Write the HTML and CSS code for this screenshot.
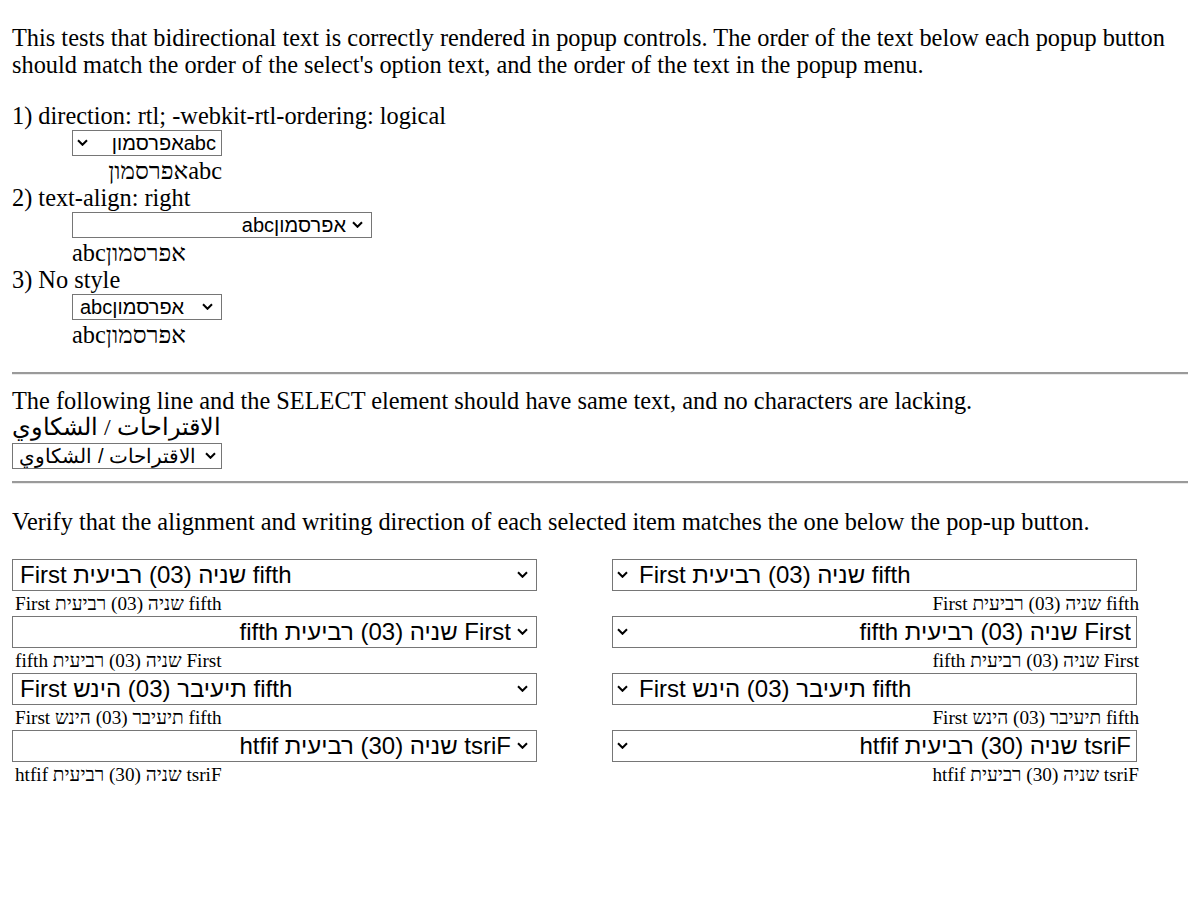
FILE: index.html
```html
<!DOCTYPE html>
<html>
<head>
<meta charset="utf-8">
<title>Bidi popup test</title>
<link rel="stylesheet" href="styles.css">
</head>
<body>
<p class="intro">This tests that bidirectional text is correctly rendered in popup controls. The order of the text below each popup button should match the order of the select's option text, and the order of the text in the popup menu.</p>

<div class="cases">
  <div class="label">1) direction: rtl; -webkit-rtl-ordering: logical</div>
  <div class="case">
    <div class="sel sel-top sel-rtl w150">
      <span class="sel-text d-rtl">abcאפרסמון</span>
      <span class="arrow"><svg width="11" height="7" viewBox="0 0 11 7"><polyline points="1,1.3 5.5,5.8 10,1.3"/></svg></span>
    </div>
    <div class="out w150 d-rtl">abcאפרסמון</div>
  </div>

  <div class="label">2) text-align: right</div>
  <div class="case">
    <div class="sel sel-top sel-ltr w300">
      <span class="sel-text d-ltr right">abcאפרסמון</span>
      <span class="arrow"><svg width="11" height="7" viewBox="0 0 11 7"><polyline points="1,1.3 5.5,5.8 10,1.3"/></svg></span>
    </div>
    <div class="out">abcאפרסמון</div>
  </div>

  <div class="label">3) No style</div>
  <div class="case">
    <div class="sel sel-top sel-ltr w150">
      <span class="sel-text d-ltr">abcאפרסמון</span>
      <span class="arrow"><svg width="11" height="7" viewBox="0 0 11 7"><polyline points="1,1.3 5.5,5.8 10,1.3"/></svg></span>
    </div>
    <div class="out">abcאפרסמון</div>
  </div>
</div>

<hr class="sep">

<div class="line">The following line and the SELECT element should have same text, and no characters are lacking.</div>
<div class="line arabic">الاقتراحات / الشكاوي</div>
<div class="sel sel-top sel-ltr sel-ar">
  <span class="sel-text d-rtl">الاقتراحات / الشكاوي</span>
  <span class="arrow arrow-tight"><svg width="11" height="7" viewBox="0 0 11 7"><polyline points="1,1.3 5.5,5.8 10,1.3"/></svg></span>
</div>

<hr class="sep">

<p class="verify">Verify that the alignment and writing direction of each selected item matches the one below the pop-up button.</p>

<div class="grid">
  <div class="cell">
    <div class="sel sel-big sel-ltr"><span class="sel-text d-ltr">First שניה (03) רביעית fifth</span><span class="arrow"><svg width="11" height="7" viewBox="0 0 11 7"><polyline points="1,1.3 5.5,5.8 10,1.3"/></svg></span></div>
    <div class="small"><span class="d-ltr">First שניה (03) רביעית fifth</span></div>
  </div>
  <div class="cell cell-right">
    <div class="sel sel-big sel-rtl"><span class="sel-text d-ltr">First שניה (03) רביעית fifth</span><span class="arrow"><svg width="11" height="7" viewBox="0 0 11 7"><polyline points="1,1.3 5.5,5.8 10,1.3"/></svg></span></div>
    <div class="small"><span class="d-ltr">First שניה (03) רביעית fifth</span></div>
  </div>

  <div class="cell">
    <div class="sel sel-big sel-ltr"><span class="sel-text d-rtl">First שניה (03) רביעית fifth</span><span class="arrow"><svg width="11" height="7" viewBox="0 0 11 7"><polyline points="1,1.3 5.5,5.8 10,1.3"/></svg></span></div>
    <div class="small"><span class="d-rtl">First שניה (03) רביעית fifth</span></div>
  </div>
  <div class="cell cell-right">
    <div class="sel sel-big sel-rtl"><span class="sel-text d-rtl">First שניה (03) רביעית fifth</span><span class="arrow"><svg width="11" height="7" viewBox="0 0 11 7"><polyline points="1,1.3 5.5,5.8 10,1.3"/></svg></span></div>
    <div class="small"><span class="d-rtl">First שניה (03) רביעית fifth</span></div>
  </div>

  <div class="cell">
    <div class="sel sel-big sel-ltr"><span class="sel-text o-ltr">First שניה (03) רביעית fifth</span><span class="arrow"><svg width="11" height="7" viewBox="0 0 11 7"><polyline points="1,1.3 5.5,5.8 10,1.3"/></svg></span></div>
    <div class="small"><span class="o-ltr">First שניה (03) רביעית fifth</span></div>
  </div>
  <div class="cell cell-right">
    <div class="sel sel-big sel-rtl"><span class="sel-text o-ltr">First שניה (03) רביעית fifth</span><span class="arrow"><svg width="11" height="7" viewBox="0 0 11 7"><polyline points="1,1.3 5.5,5.8 10,1.3"/></svg></span></div>
    <div class="small"><span class="o-ltr">First שניה (03) רביעית fifth</span></div>
  </div>

  <div class="cell">
    <div class="sel sel-big sel-ltr"><span class="sel-text o-rtl">First שניה (03) רביעית fifth</span><span class="arrow"><svg width="11" height="7" viewBox="0 0 11 7"><polyline points="1,1.3 5.5,5.8 10,1.3"/></svg></span></div>
    <div class="small"><span class="o-rtl">First שניה (03) רביעית fifth</span></div>
  </div>
  <div class="cell cell-right">
    <div class="sel sel-big sel-rtl"><span class="sel-text o-rtl">First שניה (03) רביעית fifth</span><span class="arrow"><svg width="11" height="7" viewBox="0 0 11 7"><polyline points="1,1.3 5.5,5.8 10,1.3"/></svg></span></div>
    <div class="small"><span class="o-rtl">First שניה (03) רביעית fifth</span></div>
  </div>
</div>
</body>
</html>
```

FILE: styles.css
```css
html { background: #fff; }
body {
  margin: 0;
  padding: 24px 12px 12px;
  font-family: "Liberation Serif", "Times New Roman", serif;
  font-size: 24.35px;
  line-height: 27px;
  color: #000;
}
p { margin: 24px 0; }
p.intro { margin-top: 0; }

.cases { margin-bottom: 24px; }
.case { margin-left: 60px; }
.case .sel { margin: 1px 0; }
.line.arabic { font-size: 24px; }

.sep {
  margin: 12px 0;
  height: 0;
  border: 0;
  border-top: 2px solid #9a9a9a;
  border-bottom: 1px solid #eaeaea;
}

/* fake popup buttons */
.sel {
  display: flex;
  align-items: center;
  box-sizing: border-box;
  border: 1px solid #767676;
  background: #fff;
  font-family: "Liberation Sans", Arial, sans-serif;
  white-space: nowrap;
  overflow: hidden;
}
.sel-top { height: 26px; font-size: 20px; line-height: 24px; }
.sel-big { height: 32px; font-size: 24px; line-height: 30px; width: 525px; }
.sel-ltr { direction: ltr; padding-left: 7px; }
.sel-rtl { direction: rtl; padding-right: 5px; }
.w150 { width: 150px; }
.w300 { width: 300px; }
.sel-ar { width: 210px; margin: 2px 0 1px; }

.sel-text {
  flex: 1 1 auto;
  min-width: 0;
  overflow: hidden;
  text-align: start;
}
.sel-text.right { text-align: right; }

.arrow {
  flex: none;
  width: 25px;
  display: flex;
  align-items: center;
  justify-content: flex-end;
  padding-inline-end: 8px;
  box-sizing: border-box;
}
.sel-rtl .arrow { padding-inline-end: 4px; width: 26px; }
.arrow-tight { padding-inline-end: 5px; }
.arrow svg { display: block; margin-top: -1px; fill: none; stroke: #000; stroke-width: 2; }

.d-ltr { direction: ltr; unicode-bidi: isolate; }
.d-rtl { direction: rtl; unicode-bidi: isolate; }
.o-ltr { direction: ltr; unicode-bidi: bidi-override; }
.o-rtl { direction: rtl; unicode-bidi: bidi-override; }

.out.d-rtl { display: block; }

.grid {
  display: grid;
  grid-template-columns: 530px 530px;
  column-gap: 70px;
}
.small {
  font-size: 19.2px;
  line-height: 25px;
  padding: 0 3px;
}
.cell-right .small { text-align: right; }
```
